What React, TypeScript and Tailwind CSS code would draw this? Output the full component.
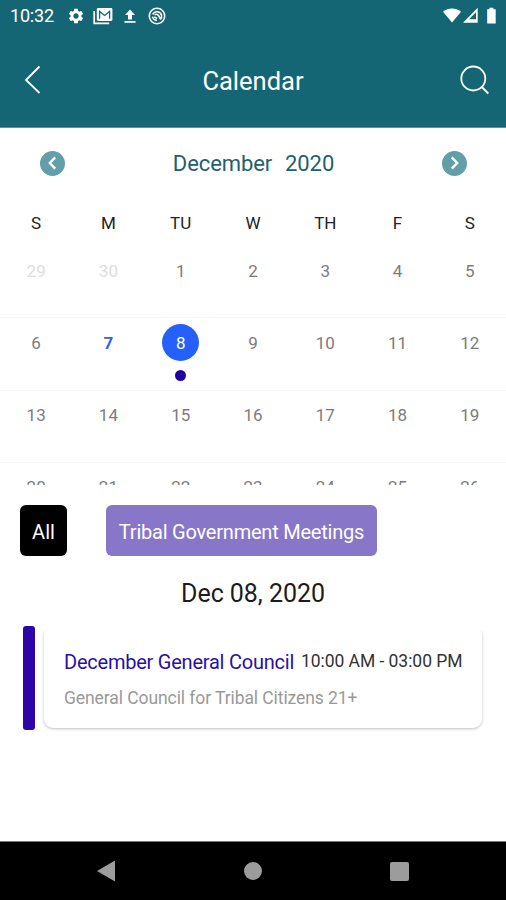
import React from 'react';
import { MdSettings } from 'react-icons/md';

interface Day {
  label: string;
  muted?: boolean;
  today?: boolean;
  selected?: boolean;
}

const weekDays = ['S', 'M', 'TU', 'W', 'TH', 'F', 'S'];

const weeks: Day[][] = [
  [
    { label: '29', muted: true },
    { label: '30', muted: true },
    { label: '1' },
    { label: '2' },
    { label: '3' },
    { label: '4' },
    { label: '5' },
  ],
  [
    { label: '6' },
    { label: '7', today: true },
    { label: '8', selected: true },
    { label: '9' },
    { label: '10' },
    { label: '11' },
    { label: '12' },
  ],
  ['13', '14', '15', '16', '17', '18', '19'].map((label) => ({ label })),
  ['20', '21', '22', '23', '24', '25', '26'].map((label) => ({ label })),
];

const StatusBar = () => (
  <div className="flex h-8 items-center justify-between pl-[10px] pr-2 text-white">
    <div className="flex items-center">
      <span className="w-[44px] whitespace-nowrap text-[18px] leading-8 tracking-[-0.2px]">10:32</span>
      <MdSettings className="ml-[13px] h-[18px] w-[18px]" />
      <svg viewBox="0 0 20 18" className="ml-[8px] h-[18px] w-5">
        <path d="M1.2 4v12.4h15" fill="none" stroke="currentColor" strokeWidth="1.7" />
        <rect x="3.8" y="1" width="15.6" height="13" rx="1.4" fill="currentColor" />
        <path d="M6.6 11.8V4.4l5 4 5-4v7.4" fill="none" stroke="#156674" strokeWidth="1.3" />
      </svg>
      <svg viewBox="0 0 12 14" className="ml-[11px] h-[14px] w-3">
        <path d="M6 0.5L11 6H8v4.4H4V6H1z M0.5 12h11v1.7H0.5z" fill="currentColor" />
      </svg>
      <svg viewBox="0 0 18 18" className="ml-[12px] h-[18px] w-[18px]" fill="none" stroke="currentColor">
        <circle cx="9" cy="9" r="7.7" strokeWidth="1.6" />
        <path d="M4.7 7.4a4.7 4.7 0 0 1 8.9 1.2c.2 2-.6 3.2-1.2 3.9" strokeWidth="1.5" />
        <path d="M6.6 7.7c1.9-1 3.6-.1 4.2 1.2l1.8 3.2" strokeWidth="1.7" />
        <path d="M4.5 9.7c.5 2.3 2.2 3.6 4.5 3.7M6.3 9.9l2.7 1.6" strokeWidth="1.5" />
      </svg>
    </div>
    <svg viewBox="0 0 56 18" className="h-[18px] w-14" fill="currentColor">
      <path d="M1 4.8C6.5 .5 13.5 .5 19 4.8L10 15.5z" />
      <path d="M35.7 .8v14.9H21z M34 5.3L27 12.2H34z" fillRule="evenodd" />
      <path d="M45.2 2.2h2.2V.7h4v1.5h2.3v14.2h-8.5z" />
    </svg>
  </div>
);

const Header = () => (
  <div className="grid h-24 grid-cols-3 items-center pb-px">
    <svg viewBox="0 0 18 30" className="ml-[24px] h-[30px] w-[18px]" fill="none" stroke="white" strokeWidth="1.8">
      <path d="M15.5 1.5L2 15l13.5 13" />
    </svg>
    <h1 className="pt-[2px] text-center text-[25.5px] leading-8 text-white">Calendar</h1>
    <svg viewBox="0 0 30 30" className="mr-[16px] h-[30px] w-[30px] justify-self-end" fill="none" stroke="white" strokeWidth="1.8">
      <circle cx="13.3" cy="13.5" r="12" />
      <path d="M21.8 22l6.5 6.5" />
    </svg>
  </div>
);

const MonthArrow = ({ next }: { next?: boolean }) => (
  <button className="flex h-[25px] w-[25px] items-center justify-center rounded-full bg-[#629fa9]">
    <svg viewBox="0 0 12 14" className="h-[14px] w-3" fill="none" stroke="white" strokeWidth="2.4">
      <path d={next ? 'M3.8 1.3L9.2 7l-5.4 5.7' : 'M8.2 1.3L2.8 7l5.4 5.7'} />
    </svg>
  </button>
);

const DayCell = ({ day }: { day: Day }) => {
  if (day.selected) {
    return (
      <div className="flex flex-col items-center pt-[6px]">
        <span className="flex h-[37px] w-[37px] items-center justify-center rounded-full bg-[#2660fb] pt-px text-white">
          {day.label}
        </span>
        <span className="mt-[9px] h-[11px] w-[11px] rounded-full bg-[#2000a2]" />
      </div>
    );
  }
  let color = 'text-[#7c7c7c]';
  if (day.muted) color = 'text-[#dedede]';
  if (day.today) color = 'font-bold text-[#3465e8]';
  return <div className={`pt-[6.55px] text-center leading-[37px] ${color}`}>{day.label}</div>;
};

const Calendar = () => (
  <div className="h-[357px] overflow-hidden">
    <div className="flex h-[70px] items-center justify-between pl-10 pr-[39px]">
      <MonthArrow />
      <h2 className="flex gap-[13px] pt-[2px] text-[22px] leading-8 tracking-[-0.1px] text-[#245f70]">
        <span>December</span>
        <span>2020</span>
      </h2>
      <MonthArrow next />
    </div>
    <div className="grid h-[48px] grid-cols-7 text-center text-[17px] leading-[51px] text-[#222]">
      {weekDays.map((name, i) => (
        <span key={i}>{name}</span>
      ))}
    </div>
    {weeks.map((week, i) => (
      <div
        key={i}
        className="grid h-[72.3px] grid-cols-7 border-b border-[#f6f6f6] text-[17px]"
      >
        {week.map((day) => (
          <DayCell key={day.label} day={day} />
        ))}
      </div>
    ))}
  </div>
);

const EventCard = () => (
  <div className="flex h-[104px] pl-[23px] pr-6">
    <div className="h-[104px] w-[12px] rounded-[3px] bg-[#2b05a8]" />
    <div className="mb-[2px] ml-[9px] flex-1 rounded-[9px] bg-white pl-5 pt-[20px] shadow-[0_1px_3px_rgba(0,0,0,0.25)] [clip-path:inset(5px_-6px_-6px_-6px)]">
      <div className="flex items-center whitespace-nowrap leading-8">
        <span className="w-[237px] text-[20px] tracking-[-0.23px] text-[#2b0fa5]">December General Council</span>
        <span className="-mt-[2px] text-[17.5px] leading-7 tracking-[-0.05px] text-[#333]">10:00 AM - 03:00 PM</span>
      </div>
      <p className="mt-[4px] text-[17.5px] leading-8 tracking-[-0.08px] text-[#999]">
        General Council for Tribal Citizens 21+
      </p>
    </div>
  </div>
);

const NavBar = () => (
  <div className="flex h-[59px] items-center justify-between border-t border-[#777] bg-black pl-[96px] pr-[97px] text-[#9c9c9c]">
    <svg viewBox="0 0 20 22" className="h-[22px] w-5" fill="currentColor">
      <path d="M1 11L19 .5v21z" />
    </svg>
    <div className="h-[18px] w-[18px] rounded-full bg-[#9c9c9c]" />
    <div className="h-[19px] w-[19px] rounded-[2px] bg-[#9c9c9c]" />
  </div>
);

export default function App() {
  return (
    <div className="flex h-[900px] w-[506px] flex-col overflow-hidden bg-white font-[Roboto,sans-serif]">
      <div className="h-32 border-b border-[#5b929c] bg-[#156674]">
        <StatusBar />
        <Header />
      </div>
      <Calendar />
      <div className="mt-[20px] flex h-[51px] gap-[39px] pl-5 text-[20px] text-white">
        <button className="w-[47px] rounded-[6px] bg-black pt-[2px]">All</button>
        <button className="w-[271px] whitespace-nowrap rounded-[6px] bg-[#8876c8] pt-[2px] tracking-[-0.22px]">
          Tribal Government Meetings
        </button>
      </div>
      <p className="mt-[22px] text-center text-[25px] leading-8 tracking-[-0.05px] text-[#1c1c1c]">Dec 08, 2020</p>
      <div className="mt-[16px] flex-1">
        <EventCard />
      </div>
      <NavBar />
    </div>
  );
}
